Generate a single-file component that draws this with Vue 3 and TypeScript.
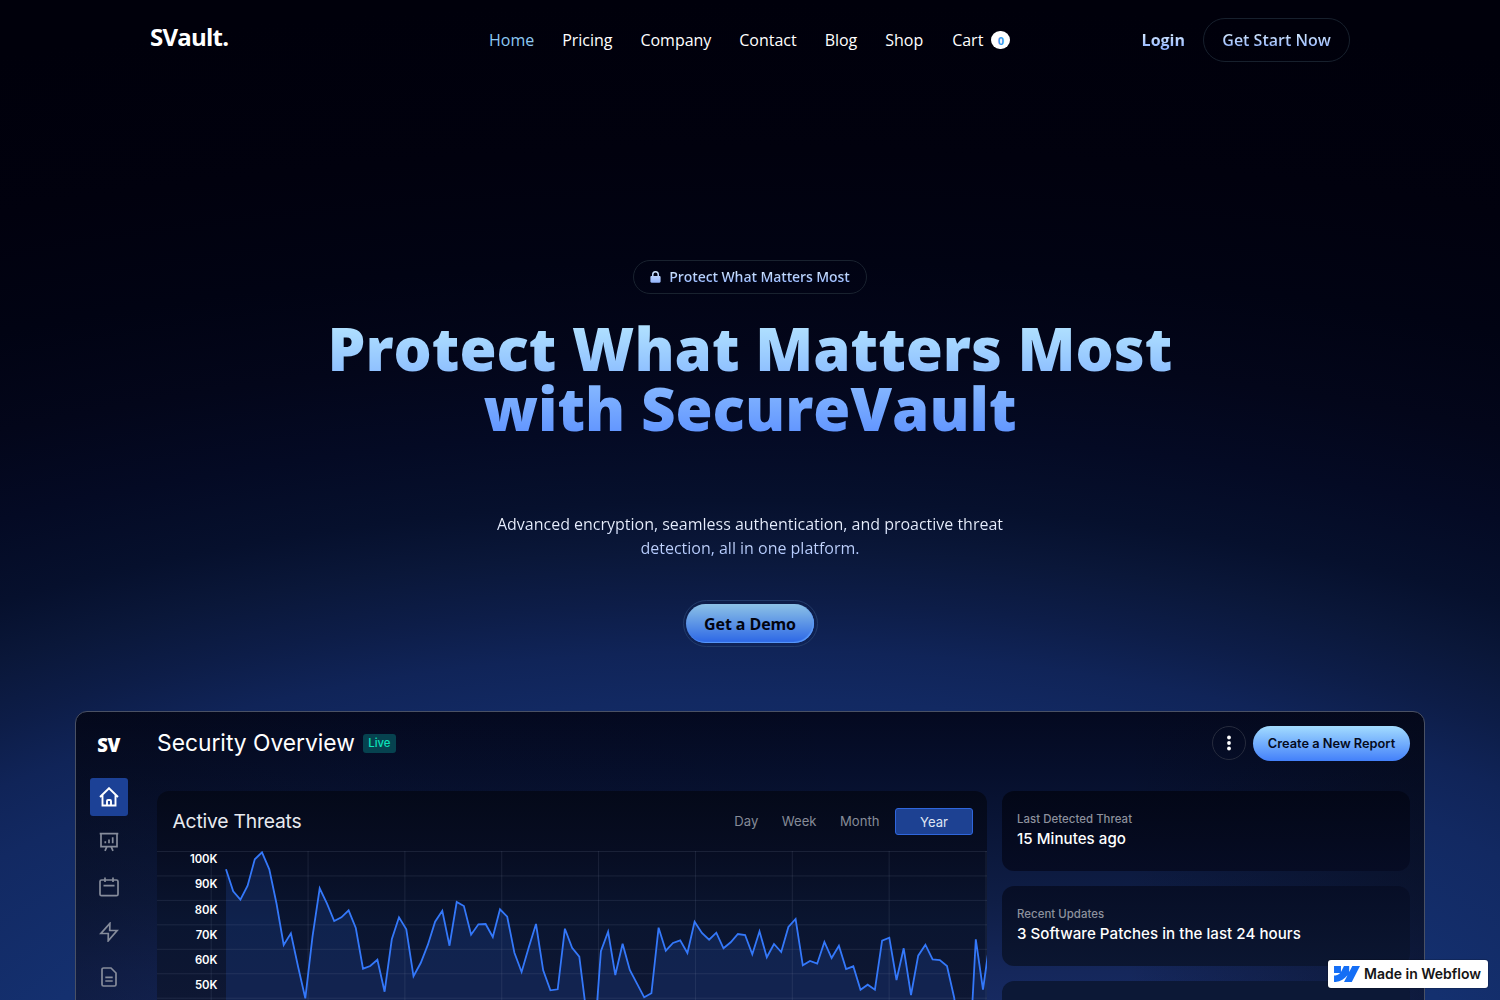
<script setup lang="ts">
interface NavLink {
  label: string
  active?: boolean
}

const links: NavLink[] = [
  { label: 'Home', active: true },
  { label: 'Pricing' },
  { label: 'Company' },
  { label: 'Contact' },
  { label: 'Blog' },
  { label: 'Shop' },
]

const ranges: string[] = ['Day', 'Week', 'Month', 'Year']
const yLabels: string[] = ['100K', '90K', '80K', '70K', '60K', '50K']

const facts = [
  { title: 'Last Detected Threat', value: '15 Minutes ago' },
  { title: 'Recent Updates', value: '3 Software Patches in the last 24 hours' },
]

// Threat samples, measured downwards from the top of the plot area.
const samples: number[] = [
  18.3, 40.3, 48.7, 34.7, 8.3, 1.3, 18.3, 52.5, 94, 82.3, 115.7, 147.3, 85.7, 37.3, 52.3, 70, 66.3,
  59.3, 77, 117.7, 115, 108.7, 140.7, 88.3, 66.3, 78.3, 125.3, 112, 93.7, 70.7, 59.7, 94.7, 51, 55,
  83.7, 73.3, 73, 86, 58.3, 65.7, 101.7, 121, 96.3, 73, 119.3, 139.3, 138.3, 77.7, 96.7, 105.7,
  163, 198, 100.3, 80.7, 124, 92.7, 119, 132.7, 146.3, 142.3, 76.7, 99.7, 92, 89.3, 102, 70.7, 82,
  88.7, 81.7, 97.3, 91.3, 83, 84, 103.3, 80.3, 106.3, 93, 101, 76, 68, 114.3, 110, 112.7, 91, 107,
  94.7, 118, 115.3, 138.7, 133.7, 138.7, 89.7, 86.7, 129, 97.3, 144, 104.7, 93.7, 108.3, 109, 115,
  146.7, 202, 222, 88.3, 138.7, 86,
]

const startX = 69
const step = 7.21
const line = samples.map((y, i) => `${(startX + i * step).toFixed(1)},${y}`).join(' ')
const area = `${startX},240 ${line} ${startX + (samples.length - 1) * step},240`

const columns = Array.from({ length: 9 }, (_, i) => 54.2 + i * 96.85)
const rows = Array.from({ length: 7 }, (_, i) => 0.5 + i * 24.45)
</script>

<template>
  <div class="page">
    <header class="header">
      <div class="brand">SVault.</div>
      <nav class="nav">
        <a v-for="l in links" :key="l.label" :class="{ active: l.active }">{{ l.label }}</a>
        <a class="cart">Cart<span class="count">0</span></a>
      </nav>
      <div class="actions">
        <a class="login"><span class="tint">Login</span></a>
        <a class="start"><span class="tint">Get Start Now</span></a>
      </div>
    </header>

    <section class="hero">
      <div class="pill">
        <svg class="lock" viewBox="0 0 11 12" width="11" height="12">
          <defs>
            <linearGradient id="lockFill" x1="0" y1="0" x2="0" y2="1">
              <stop offset="0" stop-color="#d6eafd" />
              <stop offset="1" stop-color="#93b4fd" />
            </linearGradient>
          </defs>
          <path
            fill="url(#lockFill)"
            fill-rule="evenodd"
            d="M2 5V3.5a3.5 3.5 0 0 1 7 0V5h.4c.7 0 1.200.5 1.200 1.200V10.600c0 .7-.5 1.200-1.200 1.200H1.600C.9 11.800.4 11.300.4 10.600V6.200C.4 5.500.9 5 1.600 5H2Zm1.500 0h4V3.500a2 2 0 0 0-4 0V5Z"
          />
        </svg>
        <span class="tint">Protect What Matters Most</span>
      </div>
      <h1>Protect What Matters Most<br />with SecureVault</h1>
      <p>Advanced encryption, seamless authentication, and proactive threat<br />detection, all in one platform.</p>
      <div class="demo-ring"><a class="demo">Get a Demo</a></div>
    </section>

    <section class="dash">
      <aside class="side">
        <div class="mark">SV</div>
        <div class="item on">
          <svg viewBox="0 0 20 20" width="20" height="20">
            <path d="M1 10 10 1.200 19 10M3.500 8V18.500H16.500V8M8 18.500V14a1 1 0 0 1 1-1h2a1 1 0 0 1 1 1V18.500" />
          </svg>
        </div>
        <div class="item">
          <svg viewBox="0 0 20 20" width="20" height="20">
            <path d="M.7 1.700H19.300M2 1.700V14.700H18V1.700M6 18.800 7.800 14.900M14 18.800 12.200 14.900M6.300 11.200V9.300M10 11.200V7.500M13.700 11.200V5.200" />
          </svg>
        </div>
        <div class="item">
          <svg viewBox="0 0 20 20" width="20" height="20">
            <rect x="1" y="3" width="18" height="15.700" rx="1.500" />
            <path d="M6 .5V5M14 .5V5M4.500 8.700H15.500" />
          </svg>
        </div>
        <div class="item">
          <svg viewBox="0 0 20 20" width="20" height="20">
            <path d="M10.900 1.400 1.900 11.500H9.300L9.200 18.800 18.100 8.500H10.700Z" />
          </svg>
        </div>
        <div class="item">
          <svg viewBox="0 0 20 20" width="20" height="20">
            <path d="M12 1H4.500A1.500 1.500 0 0 0 3 2.500V17.500A1.500 1.500 0 0 0 4.500 19H15.500A1.500 1.500 0 0 0 17 17.500V6ZM6.300 10.300H13.700M6.300 14H13.700" />
          </svg>
        </div>
      </aside>

      <div class="main">
        <div class="top">
          <h2>Security Overview</h2>
          <span class="live">Live</span>
          <span class="more">
            <svg viewBox="0 0 6 16" width="6" height="16">
              <circle cx="3" cy="2.500" r="1.900" />
              <circle cx="3" cy="8" r="1.900" />
              <circle cx="3" cy="13.500" r="1.900" />
            </svg>
          </span>
          <a class="report">Create a New Report</a>
        </div>

        <div class="grid">
          <div class="card chart">
            <div class="chart-head">
              <h3>Active Threats</h3>
              <div class="ranges">
                <span v-for="r in ranges" :key="r" :class="{ sel: r === 'Year' }">{{ r }}</span>
              </div>
            </div>
            <div class="plot">
              <svg viewBox="0 0 830 240" width="830" height="240">
                <polygon :points="area" class="area" />
                <g class="lines">
                  <line v-for="y in rows" :key="'r' + y" x1="0" x2="830" :y1="y" :y2="y" />
                  <line v-for="x in columns" :key="'c' + x" :x1="x" :x2="x" y1="0" y2="240" />
                </g>
                <polyline :points="line" class="series" />
              </svg>
              <ul class="ticks">
                <li v-for="t in yLabels" :key="t">{{ t }}</li>
              </ul>
            </div>
          </div>
          <div class="facts">
            <div v-for="f in facts" :key="f.title" class="card fact">
              <small>{{ f.title }}</small>
              <strong>{{ f.value }}</strong>
            </div>
            <div class="card fact"></div>
          </div>
        </div>
      </div>
    </section>

    <a class="badge">
      <svg viewBox="0 4.515 24 14.970" width="26" height="16.200">
        <path
          fill="#146ef5"
          d="m24 4.515-7.658 14.970H9.149l3.205-6.204h-.144C9.566 16.713 5.621 18.973 0 19.485v-6.118s3.596-.213 5.710-2.435H0V4.515h6.417v5.278l.144-.001 2.622-5.277h4.854v5.244h.144l2.720-5.244H24Z"
        />
      </svg>
      <span>Made in Webflow</span>
    </a>
  </div>
</template>

<style>
body {
  margin: 0;
  background: #00000c;
}
</style>

<style scoped>
* {
  box-sizing: border-box;
}
.page {
  position: relative;
  width: 1500px;
  height: 1000px;
  overflow: hidden;
  font-family: 'Open Sans', sans-serif;
  color: #fff;
  background: radial-gradient(
    ellipse 2480px 1180px at 50% 1180px,
    #17357c 0%,
    #14306f 31.7%,
    #122962 40.7%,
    #102458 44.900%,
    #0d1d48 49%,
    #0a1739 53.400%,
    #06102d 57.600%,
    #040a24 63.600%,
    #03061a 70.300%,
    #010313 78%,
    #01010e 87.300%,
    #00000b 100%
  );
}
.header {
  display: flex;
  align-items: center;
  width: 1200px;
  height: 80px;
  margin: 0 auto;
}
.brand {
  width: 325px;
  padding-bottom: 8px;
  font-size: 24px;
  font-weight: 700;
  letter-spacing: -0.78px;
}
.nav {
  display: flex;
  align-items: center;
  font-size: 16px;
  line-height: 24px;
  letter-spacing: -0.02px;
}
.nav a {
  padding: 0 14px;
}
.nav .active {
  color: #8ec9f3;
}
.nav .cart {
  display: flex;
  align-items: center;
  gap: 8px;
  padding-left: 15px;
}
.count {
  width: 19px;
  height: 18px;
  border-radius: 9px;
  background: #fff;
  color: #3898ec;
  font-size: 11px;
  font-weight: 700;
  line-height: 19px;
  text-align: center;
}
.actions {
  display: flex;
  align-items: center;
  gap: 18px;
  margin-left: auto;
}
.tint {
  background: linear-gradient(#dff2ff 10%, #85a9ff 100%);
  -webkit-background-clip: text;
  background-clip: text;
  color: transparent;
}
.login {
  font-weight: 700;
}
.start {
  width: 147px;
  height: 44px;
  border: 1px solid #17202d;
  border-radius: 22px;
  font-weight: 600;
  line-height: 42px;
  text-align: center;
}
.hero {
  display: flex;
  flex-direction: column;
  align-items: center;
  padding-top: 180px;
  text-align: center;
}
.pill {
  display: flex;
  align-items: center;
  justify-content: center;
  gap: 8px;
  width: 234px;
  height: 34px;
  padding-bottom: 1px;
  border: 1px solid #19222f;
  border-radius: 17px;
  font-size: 14px;
  font-weight: 600;
  letter-spacing: -0.1px;
}
.lock {
  margin-top: 1px;
}
h1 {
  margin: 24px 0 0;
  font-size: 60px;
  font-weight: 800;
  line-height: 60px;
  background: linear-gradient(#b2e2ff 5%, #5e92ff 100%);
  -webkit-background-clip: text;
  background-clip: text;
  color: transparent;
}
.hero p {
  margin: 74px 0 0;
  font-size: 16px;
  line-height: 24px;
  letter-spacing: -0.01px;
  background: linear-gradient(#fff, #a9c3ff);
  -webkit-background-clip: text;
  background-clip: text;
  color: transparent;
}
.demo-ring {
  display: flex;
  justify-content: center;
  width: 135px;
  height: 47px;
  margin-top: 40px;
  padding-top: 3px;
  border: 1px solid #223a68;
  border-radius: 24px;
}
.demo {
  width: 128px;
  height: 39px;
  border-radius: 20px;
  background: linear-gradient(#8dc2e6, #2b66e6);
  box-shadow: inset -1px -1px 1px #5b9bfa;
  color: #02040f;
  font-weight: 700;
  line-height: 40px;
  letter-spacing: -0.1px;
}
.dash {
  display: flex;
  width: 1350px;
  height: 320px;
  margin: 64px auto 0;
  border: 1px solid #4a5164;
  border-radius: 12px;
  background:
    linear-gradient(90deg, rgba(5, 8, 20, 0.36), rgba(5, 8, 20, 0.1) 20%, transparent 60%, transparent 78%, rgba(5, 8, 20, 0.45)),
    linear-gradient(#040920, #060f2c 60px, #0f1e46 190px, #15275b 260px, #182c66);
  font-family: Inter, sans-serif;
}
.side {
  display: flex;
  flex-direction: column;
  align-items: center;
  width: 66px;
}
.mark {
  height: 66px;
  padding: 19px 1px 0 0;
  font-family: 'Open Sans', sans-serif;
  font-size: 18.500px;
  font-weight: 800;
  line-height: 28px;
  letter-spacing: -0.5px;
}
.item {
  display: flex;
  align-items: center;
  justify-content: center;
  width: 38px;
  height: 38px;
  margin-bottom: 7px;
}
.item svg {
  fill: none;
  stroke: #868c9b;
  stroke-width: 1.7;
}
.item.on {
  border-radius: 3px;
  background: #1c4196;
}
.item.on svg {
  stroke: #fff;
  stroke-width: 1.9;
}
.main {
  flex: 1;
  padding: 14px 14px 0 15px;
}
.top {
  display: flex;
  align-items: center;
  height: 35px;
}
h2 {
  margin: 0 0 3px;
  font-size: 22.800px;
  font-weight: 400;
}
.live {
  width: 33px;
  height: 19px;
  margin-bottom: 1px;
  margin-left: 8px;
  border-radius: 3px;
  background: #06424f;
  color: #0ce3ba;
  font-size: 11.300px;
  font-weight: 500;
  line-height: 19px;
  text-align: center;
}
.more {
  display: flex;
  align-items: center;
  justify-content: center;
  width: 34px;
  height: 34px;
  margin-bottom: 2px;
  margin-left: auto;
  border: 1px solid #262b3d;
  border-radius: 50%;
}
.more svg {
  fill: #fff;
}
.report {
  width: 157px;
  height: 35px;
  margin-left: 7px;
  border-radius: 18px;
  background: linear-gradient(#a3dcff, #4380fa);
  color: #050b1e;
  font-size: 12.800px;
  font-weight: 600;
  line-height: 35px;
  text-align: center;
}
.grid {
  display: flex;
  gap: 15px;
  margin-top: 30px;
}
.card {
  border-radius: 12px;
}
.chart {
  width: 830px;
  height: 230px;
  overflow: hidden;
  background: linear-gradient(#040919, #070d22 60px, #0a1530 130px, #0e1733 210px);
}
.chart-head {
  display: flex;
  align-items: center;
  justify-content: space-between;
  height: 60px;
  padding: 0 14px 0 15.500px;
}
h3 {
  margin: 0 0 1px;
  color: #e8eaf0;
  font-size: 19.300px;
  font-weight: 400;
  letter-spacing: -0.2px;
}
.ranges {
  display: flex;
  align-items: center;
  gap: 23.500px;
  color: #868b98;
  font-size: 13.100px;
}
.ranges .sel {
  width: 78px;
  height: 27px;
  margin-left: -8px;
  border: 1px solid #2f66dd;
  border-radius: 3px;
  background: #1d4192;
  color: #dfe5f3;
  line-height: 26px;
  text-align: center;
}
.plot {
  position: relative;
  height: 170px;
}
.plot svg {
  display: block;
}
.area {
  fill: #2453b4;
  fill-opacity: 0.22;
}
.lines {
  stroke: #8c9ab8;
  stroke-opacity: 0.14;
}
.series {
  fill: none;
  stroke: #3478fa;
  stroke-width: 1.8;
}
.ticks {
  position: absolute;
  top: -4px;
  left: 0;
  width: 60.500px;
  margin: 0;
  padding: 0;
  list-style: none;
  text-align: right;
  font-size: 11.300px;
  font-weight: 600;
  line-height: 25.300px;
}
.facts {
  display: flex;
  flex: 1;
  flex-direction: column;
  gap: 15px;
}
.fact {
  display: flex;
  flex-direction: column;
  height: 80px;
  padding: 20px 15px 0;
  background: linear-gradient(#030717, #060c24);
}
.fact + .fact {
  background: linear-gradient(#070e26, #0b1631);
}
.fact + .fact:last-child {
  background: #0c1836;
}
.fact small {
  color: #8d919d;
  font-size: 11.400px;
  font-weight: 500;
  line-height: 16px;
  letter-spacing: 0.05px;
}
.fact strong {
  font-size: 15.100px;
  font-weight: 450;
  line-height: 23px;
  letter-spacing: 0.04px;
}
.badge {
  position: absolute;
  right: 12px;
  bottom: 12px;
  display: flex;
  align-items: center;
  justify-content: space-between;
  width: 160px;
  height: 28px;
  padding: 0 7px 0 6px;
  border-radius: 3px;
  background: #fff;
  box-shadow: 0 0 0 1px rgba(0, 0, 0, 0.15);
  color: #151515;
  font-family: Inter, sans-serif;
  font-size: 14px;
  font-weight: 600;
}
.badge span {
  margin-bottom: 1px;
}
</style>
